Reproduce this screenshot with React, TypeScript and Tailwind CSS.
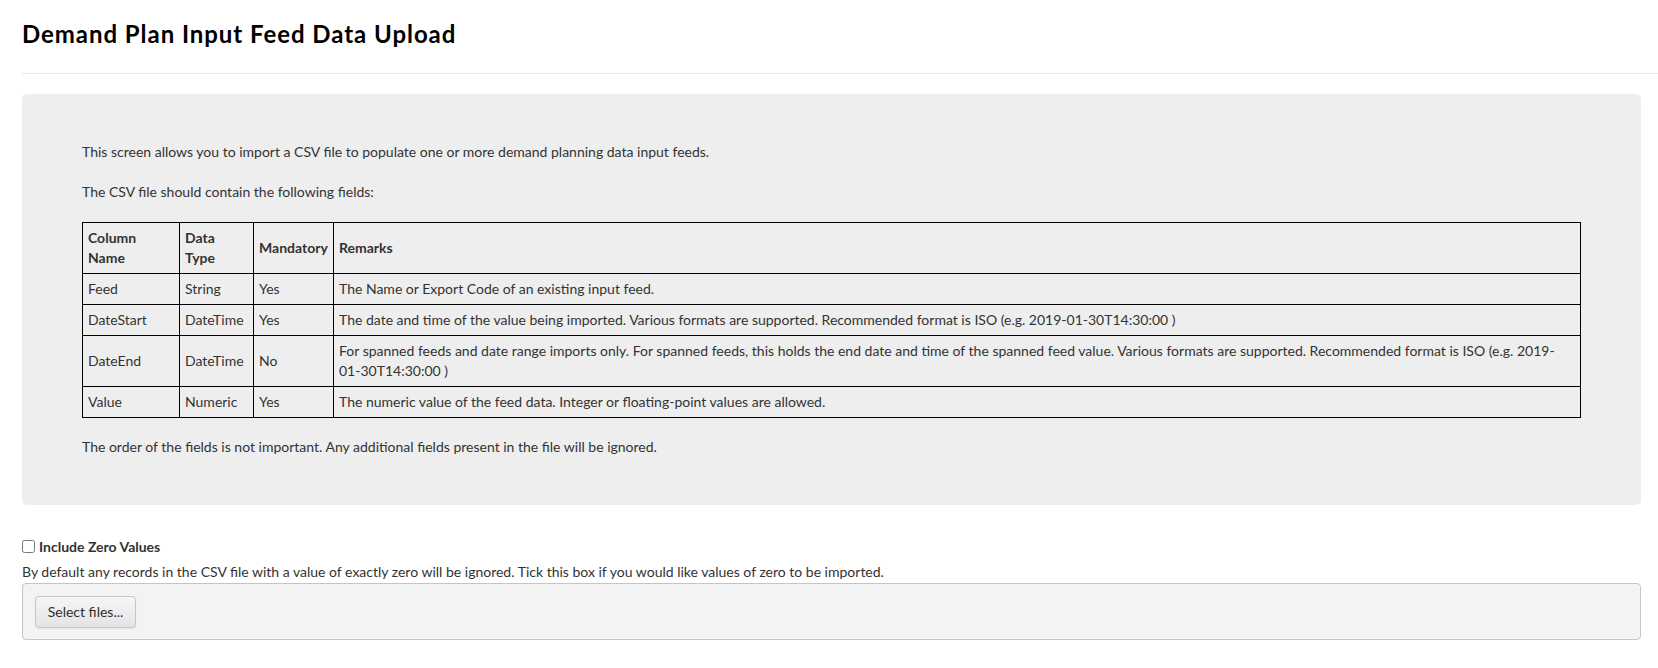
import React from 'react';

interface FieldRow {
  name: string;
  type: string;
  mandatory: string;
  remarks: string;
}

const fields: FieldRow[] = [
  { name: 'Feed', type: 'String', mandatory: 'Yes', remarks: 'The Name or Export Code of an existing input feed.' },
  {
    name: 'DateStart',
    type: 'DateTime',
    mandatory: 'Yes',
    remarks:
      'The date and time of the value being imported. Various formats are supported. Recommended format is ISO (e.g. 2019-01-30T14:30:00 )'
  },
  {
    name: 'DateEnd',
    type: 'DateTime',
    mandatory: 'No',
    remarks:
      'For spanned feeds and date range imports only. For spanned feeds, this holds the end date and time of the spanned feed value. Various formats are supported. Recommended format is ISO (e.g. 2019-01-30T14:30:00 )'
  },
  {
    name: 'Value',
    type: 'Numeric',
    mandatory: 'Yes',
    remarks: 'The numeric value of the feed data. Integer or floating-point values are allowed.'
  }
];

const cell = 'border border-black px-[5px] py-[5px] align-middle';

export default function App() {
  return (
    <div className="min-h-screen bg-white pl-[22px] font-['Lato','Open_Sans',sans-serif] text-[14px] leading-[20px] text-[#333]">
      <div className="h-[74px] border-b border-[#e8e8e8] pt-[21px]">
        <h1 className="font-['Lato',sans-serif] text-[24px] leading-[26px] font-bold tracking-[0.95px] text-black">
          Demand Plan Input Feed Data Upload
        </h1>
      </div>

      <div className="mr-[17px]">
        <div className="mt-[20px] rounded-[5px] bg-[#eeeeee] px-[60px] pt-[48px] pb-[48px]">
          <p className="mb-[20px]">
            This screen allows you to import a CSV file to populate one or more demand planning data input feeds.
          </p>
          <p className="mb-[20px]">The CSV file should contain the following fields:</p>

          <table className="w-full table-fixed border-collapse border border-black text-left">
            <colgroup>
              <col className="w-[97px]" />
              <col className="w-[74px]" />
              <col className="w-[80px]" />
              <col />
            </colgroup>
            <thead>
              <tr className="font-bold">
                <th className={cell}>
                  Column
                  <br />
                  Name
                </th>
                <th className={cell}>
                  Data
                  <br />
                  Type
                </th>
                <th className={cell}>Mandatory</th>
                <th className={cell}>Remarks</th>
              </tr>
            </thead>
            <tbody>
              {fields.map((f) => (
                <tr key={f.name}>
                  <td className={cell}>{f.name}</td>
                  <td className={cell}>{f.type}</td>
                  <td className={cell}>{f.mandatory}</td>
                  <td className={cell}>{f.remarks}</td>
                </tr>
              ))}
            </tbody>
          </table>

          <p className="mt-[19px]">
            The order of the fields is not important. Any additional fields present in the file will be ignored.
          </p>
        </div>

        <div className="mt-[32px]">
          <label className="flex h-[25px] items-start gap-[4px] font-bold">
            <input type="checkbox" className="mt-[3px] h-[13px] w-[13px]" />
            <span className="leading-[20px]">Include Zero Values</span>
          </label>
          <p>
            By default any records in the CSV file with a value of exactly zero will be ignored. Tick this box if you would
            like values of zero to be imported.
          </p>
        </div>

        <div className="mt-px rounded-[4px] border border-[#c5c5c5] bg-[#f3f3f3] px-[12px] pt-[12px] pb-[11px]">
          <button
            type="button"
            className="h-[32px] w-[101px] rounded-[4px] border border-[#c5c5c5] bg-gradient-to-b from-[#f6f6f6] to-[#e4e4e4] text-[14px] text-[#2e2e2e] shadow-[0_1px_1px_rgba(0,0,0,0.06)]"
          >
            Select files...
          </button>
        </div>
      </div>
    </div>
  );
}
